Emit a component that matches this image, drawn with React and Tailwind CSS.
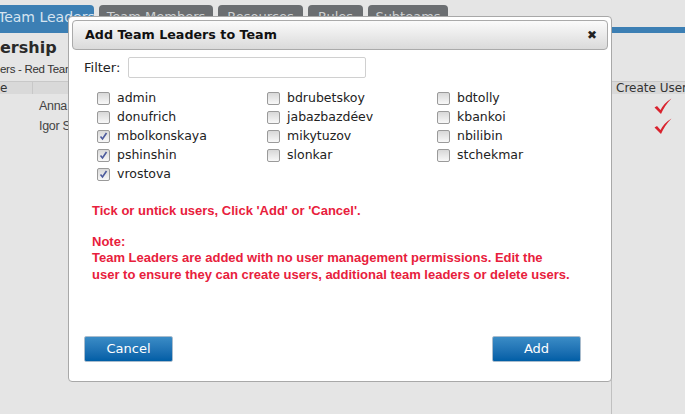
const users = [
  ['admin', false], ['bdrubetskoy', false], ['bdtolly', false],
  ['donufrich', false], ['jabazbazdéev', false], ['kbankoi', false],
  ['mbolkonskaya', true], ['mikytuzov', false], ['nbilibin', false],
  ['pshinshin', true], ['slonkar', false], ['stchekmar', false],
  ['vrostova', true],
];

function Box({ checked }) {
  return (
    <span className="relative inline-block w-[13px] h-[13px] border border-[#9a9a9a] rounded-[2px] bg-gradient-to-b from-[#d8d8d8] to-[#f8f8f8] shrink-0">
      {checked && (
        <svg className="absolute left-[1px] top-[1px]" width="9" height="9" viewBox="0 0 9 9">
          <path d="M1.5 4.5 L3.5 7 L7.5 1" fill="none" stroke="#4c5a9c" strokeWidth="1.6" />
        </svg>
      )}
    </span>
  );
}

function Check() {
  return (
    <svg width="18" height="17" viewBox="0 0 18 17">
      <path d="M0.5 9.5 L3 8 L6.5 12 Q10 5 17.5 0.5 Q11 7 7 16 Z" fill="#d9232e" />
    </svg>
  );
}

export default function App() {
  return (
    <div className="relative w-[685px] h-[414px] overflow-hidden bg-[#e5e5e5] font-['DejaVu_Sans',sans-serif]">
      {/* background page */}
      <div className="flex gap-[5px] pt-[5px] h-[27px]">
        <div className="-ml-[10px] w-[104px] rounded-t-[4px] bg-[#3c7fb4] text-[#d6e4f0] text-[14px] leading-[24px] pl-[8px] whitespace-nowrap">Team Leaders</div>
        <div className="w-[114px] rounded-t-[4px] bg-[#6b6e71] text-[#cfd2d4] text-[13px] leading-[24px] text-center whitespace-nowrap">Team Members</div>
        <div className="w-[85px] rounded-t-[4px] bg-[#6b6e71] text-[#cfd2d4] text-[13px] leading-[24px] text-center whitespace-nowrap">Resources</div>
        <div className="w-[55px] rounded-t-[4px] bg-[#6b6e71] text-[#cfd2d4] text-[13px] leading-[24px] text-center whitespace-nowrap">Rules</div>
        <div className="w-[80px] rounded-t-[4px] bg-[#6b6e71] text-[#cfd2d4] text-[13px] leading-[24px] text-center whitespace-nowrap">Subteams</div>
      </div>
      <div className="h-[6px] bg-[#3c7fb4]" />
      <div className="mt-[5px] text-[16px] font-bold text-[#2a2a2a] leading-[20px]">ership</div>
      <div className="mt-[4px] text-[11.5px] text-[#333] leading-[14px] font-['Liberation_Sans',sans-serif] tracking-[-0.3px]">ers - Red Team</div>
      <div className="mt-[5px] flex h-[13px] border-t border-[#c8c8c8] bg-[#d9d9d9] text-[12px] leading-[12px] text-[#333]">
        <div className="w-[33px] border-r border-[#c8c8c8]">e</div>
        <div className="flex-1" />
        <div className="w-[74px] border-l border-[#c0c0c0] pl-[4px] whitespace-nowrap overflow-hidden">Create Users</div>
      </div>
      <div className="flex">
        <div className="w-[611px] pl-[39px] text-[12.5px] font-['Liberation_Sans',sans-serif] text-[#444] tracking-[-0.3px]">
          <div className="h-[20px] leading-[24px]">Anna</div>
          <div className="h-[20px] leading-[24px]">Igor S</div>
        </div>
        <div className="flex-1 pl-[42px] pt-[4px] flex flex-col gap-[3px] border-l border-[#c0c0c0] h-[330px]">
          <Check />
          <Check />
        </div>
      </div>

      {/* dialog */}
      <div className="absolute left-[68px] top-[16px] w-[544px] h-[366px] bg-white border border-[#a8a8a8] rounded-[4px] p-[3px]">
        <div className="h-[30px] rounded-[4px] border border-[#aaaaaa] bg-gradient-to-b from-[#fbfbfb] to-[#dadada] flex items-center pl-[12px] pr-[10px]">
          <span className="flex-1 text-[12.7px] font-bold text-[#111]">Add Team Leaders to Team</span>
          <span className="text-[12px] font-bold text-[#222] leading-none">✖</span>
        </div>
        <div className="mt-[7px] flex items-center pl-[12px] h-[21px]">
          <span className="text-[13px] text-[#222] w-[44px]">Filter:</span>
          <div className="w-[238px] h-[21px] border border-[#d0d0d0] rounded-[2px] bg-white" />
        </div>
        <div className="mt-[11px] ml-[25px] grid grid-cols-[170px_170px_170px]">
          {users.map(([name, c]) => (
            <div key={name} className="h-[19px] flex items-center gap-[7px]">
              <Box checked={c} />
              <span className="text-[12.5px] text-[#222]">{name}</span>
            </div>
          ))}
        </div>
        <div className="mt-[19px] ml-[20px] w-[478px] font-['Liberation_Sans',sans-serif] font-bold text-[13px] leading-[16px] text-[#e8203c]">
          <p>Tick or untick users, Click 'Add' or 'Cancel'.</p>
          <p className="mt-[15px]">Note:</p>
          <p className="leading-[16.5px]">Team Leaders are added with no user management permissions. Edit the user to ensure they can create users, additional team leaders or delete users.</p>
        </div>
        <div className="mt-[53px] flex justify-between px-[12px]">
          <button className="w-[89px] h-[26px] rounded-[2px] border border-[#a9bccd] bg-gradient-to-b from-[#3a8cc6] to-[#005ea6] text-white text-[13px]">Cancel</button>
          <button className="mr-[15px] w-[89px] h-[26px] rounded-[2px] border border-[#a9bccd] bg-gradient-to-b from-[#3a8cc6] to-[#005ea6] text-white text-[13px]">Add</button>
        </div>
      </div>
    </div>
  );
}
